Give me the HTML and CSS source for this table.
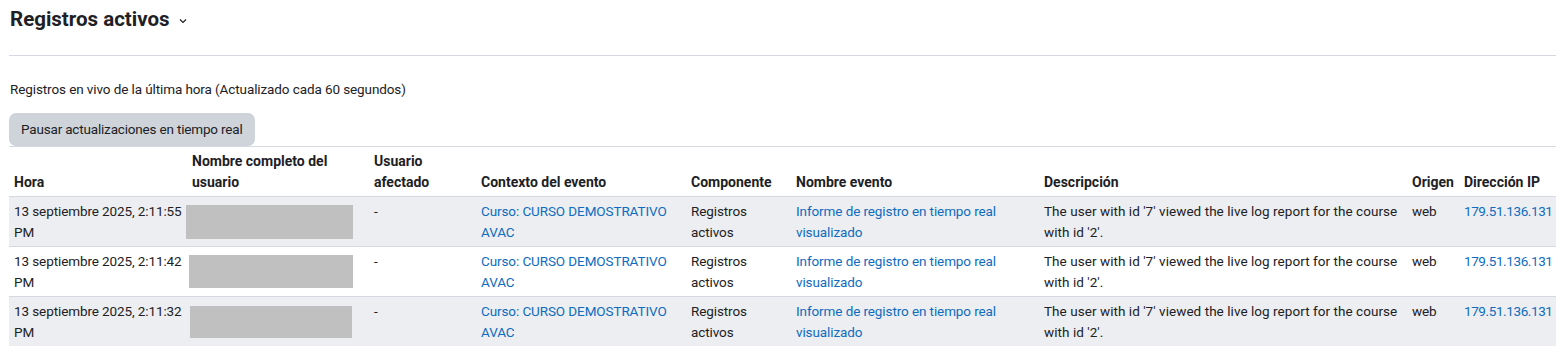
FILE: index.html
```html
<!DOCTYPE html>
<html lang="es">
<head>
<meta charset="utf-8">
<title>Registros activos</title>
<link rel="stylesheet" href="styles.css">
</head>
<body>
<div class="page">
  <div class="page-header">
    <h2 class="title">Registros activos</h2>
    <svg class="chevron" width="8" height="6" viewBox="0 0 8 6" aria-hidden="true"><path d="M1 1.5 L4 4.5 L7 1.5" fill="none" stroke="#1d2125" stroke-width="1.2"/></svg>
  </div>
  <hr class="divider">
  <p class="info">Registros en vivo de la última hora (Actualizado cada 60 segundos)</p>
  <button class="btn" type="button">Pausar actualizaciones en tiempo real</button>
  <table class="logs">
    <colgroup>
      <col class="c-hora"><col class="c-nombre"><col class="c-afectado"><col class="c-contexto"><col class="c-comp"><col class="c-evento"><col class="c-desc"><col class="c-origen"><col class="c-ip">
    </colgroup>
    <thead>
      <tr>
        <th>Hora</th>
        <th>Nombre completo del usuario</th>
        <th>Usuario afectado</th>
        <th>Contexto del evento</th>
        <th>Componente</th>
        <th>Nombre evento</th>
        <th>Descripción</th>
        <th>Origen</th>
        <th>Dirección IP</th>
      </tr>
    </thead>
    <tbody>
      <tr class="striped">
        <td>13 septiembre 2025, 2:11:55 PM</td>
        <td><div class="redact redact-1"></div></td>
        <td>-</td>
        <td><a href="#">Curso: CURSO DEMOSTRATIVO AVAC</a></td>
        <td>Registros activos</td>
        <td><a href="#">Informe de registro en tiempo real visualizado</a></td>
        <td class="desc">The user with id '7' viewed the live log report for the course with id '2'.</td>
        <td>web</td>
        <td><a class="ip" href="#">179.51.136.131</a></td>
      </tr>
      <tr>
        <td>13 septiembre 2025, 2:11:42 PM</td>
        <td><div class="redact redact-2"></div></td>
        <td>-</td>
        <td><a href="#">Curso: CURSO DEMOSTRATIVO AVAC</a></td>
        <td>Registros activos</td>
        <td><a href="#">Informe de registro en tiempo real visualizado</a></td>
        <td class="desc">The user with id '7' viewed the live log report for the course with id '2'.</td>
        <td>web</td>
        <td><a class="ip" href="#">179.51.136.131</a></td>
      </tr>
      <tr class="striped">
        <td>13 septiembre 2025, 2:11:32 PM</td>
        <td><div class="redact redact-3"></div></td>
        <td>-</td>
        <td><a href="#">Curso: CURSO DEMOSTRATIVO AVAC</a></td>
        <td>Registros activos</td>
        <td><a href="#">Informe de registro en tiempo real visualizado</a></td>
        <td class="desc">The user with id '7' viewed the live log report for the course with id '2'.</td>
        <td>web</td>
        <td><a class="ip" href="#">179.51.136.131</a></td>
      </tr>
    </tbody>
  </table>
</div>
</body>
</html>
```
FILE: styles.css
```css
* { box-sizing: border-box; }
html, body { margin: 0; padding: 0; background: #fff; }
body {
  font-family: Roboto, "Liberation Sans", sans-serif;
  font-size: 13.5px;
  letter-spacing: -0.1px;
  line-height: 21px;
  color: #1d2125;
}
.page { padding: 0 7px 0 9px; }
.page-header {
  display: flex;
  align-items: center;
  gap: 9px;
  padding: 7px 0 0 1px;
  height: 32px;
}
.title {
  margin: 0;
  font-size: 20.5px;
  line-height: 25px;
  font-weight: 700;
  letter-spacing: 0;
}
.chevron { margin-top: 3px; }
.divider {
  margin: 23px 0 0;
  border: 0;
  border-top: 1px solid #d5d8e1;
  height: 0;
}
.info { margin: 23px 0 13px 1px; }
.btn {
  display: block;
  font: inherit;
  letter-spacing: -0.18px;
  color: #1d2125;
  background: #ced4da;
  border: 0;
  border-radius: 7px;
  height: 33px;
  padding: 0 12px;
  white-space: nowrap;
  text-align: left;
}
.logs {
  width: 100%;
  border-collapse: collapse;
  table-layout: fixed;
}
.c-hora { width: 178px; }
.c-nombre { width: 182px; }
.c-afectado { width: 107px; }
.c-contexto { width: 210px; }
.c-comp { width: 105px; }
.c-evento { width: 248px; }
.c-desc { width: 368px; }
.c-origen { width: 52px; }
.c-ip { width: 97px; }
.logs th, .logs td {
  text-align: left;
  padding: 4px 3px 3px 5px;
  vertical-align: top;
}
.logs th {
  vertical-align: bottom;
  font-size: 14px;
  letter-spacing: 0;
  font-weight: 700;
  border-top: 1px solid #d5d8e1;
  border-bottom: 1px solid #d5d8e1;
}
.logs td { border-top: 1px solid #d5d8e1; }
.logs td.desc { letter-spacing: 0.05px; }
.logs tr.striped td { background: #eceef1; }
.logs a { color: #0f6cbf; text-decoration: none; }
.logs a.ip { letter-spacing: -0.4px; }
.redact { background: #c0c0c0; }
.redact-1 { width: 167px; height: 34px; margin: 4px 0 0 -6px; }
.redact-2 { width: 164px; height: 33px; margin: 4px 0 0 -3px; }
.redact-3 { width: 162px; height: 32px; margin: 5px 0 0 -2px; }
```
